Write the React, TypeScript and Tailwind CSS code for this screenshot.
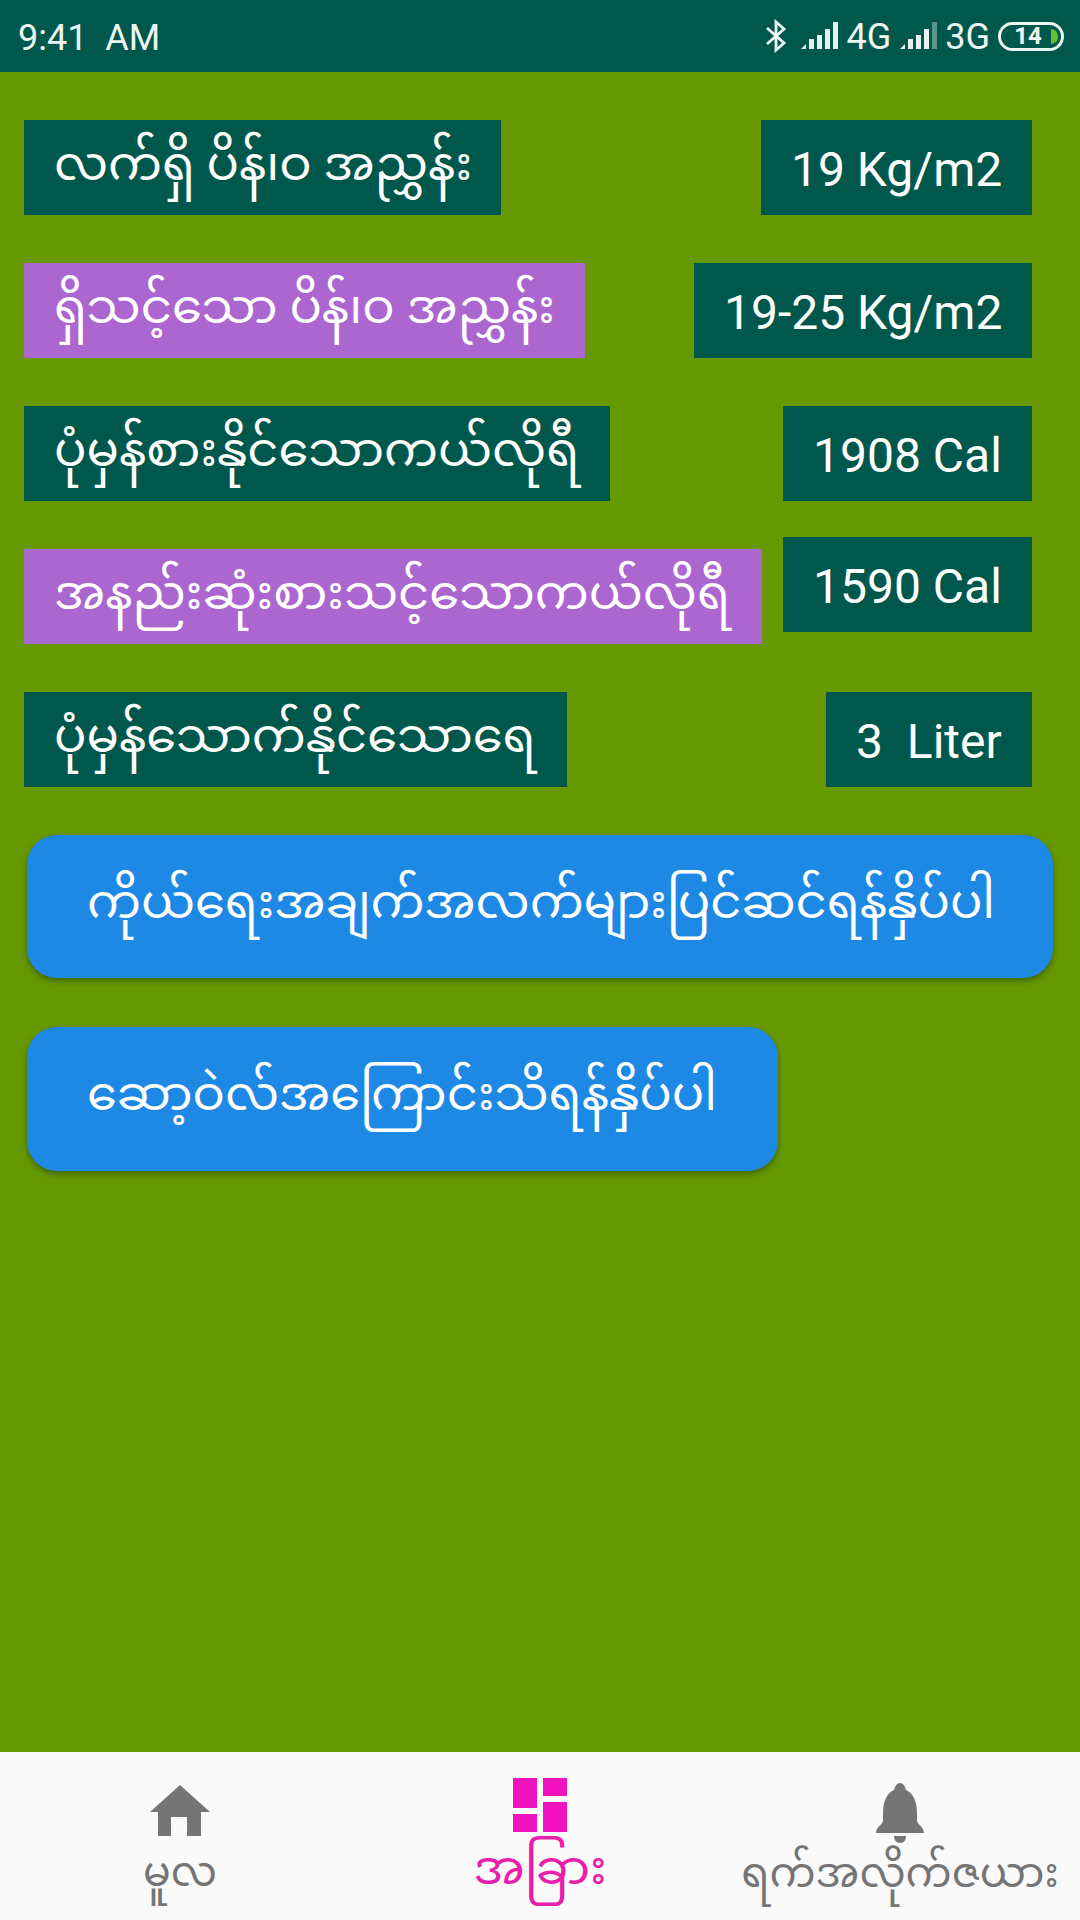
const font = "font-['Roboto','Noto_Sans_Myanmar','Padauk','Noto_Sans',sans-serif]"

const rows = [
  { label: 'လက်ရှိ ပိန်၊ဝ အညွှန်း', value: '19 Kg/m2', labelClass: 'w-[477px] bg-[#00574b]', valueClass: 'w-[271px]', rowClass: 'h-[95px] mb-[48px]' },
  { label: 'ရှိသင့်သော ပိန်၊ဝ အညွှန်း', value: '19-25 Kg/m2', labelClass: 'w-[561px] bg-[#ab66d0]', valueClass: 'w-[338px]', rowClass: 'h-[95px] mb-[48px]' },
  { label: 'ပုံမှန်စားနိုင်သောကယ်လိုရီ', value: '1908 Cal', labelClass: 'w-[586px] bg-[#00574b]', valueClass: 'w-[249px]', rowClass: 'h-[95px] mb-[36px]' },
]

function SignalIcon({ dim }: { dim?: boolean }) {
  return (
    <svg width="37" height="28" viewBox="0 0 37 28" className="text-[#e6f2ef]">
      <path d="M0 27 L5 22 L5 27 Z" fill="currentColor" />
      <rect x="8" y="17" width="5" height="10" fill="currentColor" />
      <rect x="16" y="13" width="5" height="14" fill="currentColor" />
      <rect x="24" y="7" width="5" height="20" fill="currentColor" />
      <rect x="32" y="0" width="5" height="27" fill="currentColor" opacity={dim ? 0.4 : 1} />
    </svg>
  )
}

function StatusBar() {
  return (
    <div className="h-[72px] bg-[#00574b] flex items-center justify-between pl-[18px] pr-[16px] text-[#eef6f4]">
      <span className="pt-[3px] text-[36px] font-['Roboto',sans-serif] whitespace-pre">9:41  AM</span>
      <div className="flex items-center font-['Roboto',sans-serif] text-[36px]">
        <svg width="24" height="34" viewBox="0 0 24 34" fill="none" stroke="currentColor" strokeWidth="2.8" className="mr-[13px]">
          <path d="M3 9 L20 24 L12 31 L12 3 L20 10 L3 25" />
        </svg>
        <SignalIcon />
        <span className="ml-[8px] mr-[9px] pt-[2px]">4G</span>
        <SignalIcon dim />
        <span className="ml-[8px] mr-[8px] pt-[2px]">3G</span>
        <div className="relative w-[66px] h-[29px] rounded-[15px] border-[3px] border-[#eef6f4] flex items-center justify-center pr-[6px]">
          <span className="text-[24px] font-bold leading-none">14</span>
          <div className="absolute right-[3px] top-[4px] w-[7px] h-[15px] rounded-r-[8px] bg-[#5fc32e]" />
        </div>
      </div>
    </div>
  )
}

function Box({ children, className }: { children: React.ReactNode; className: string }) {
  return (
    <div className={`h-[95px] flex items-center text-white text-[48px] pl-[30px] whitespace-pre overflow-hidden ${className}`}>
      {children}
    </div>
  )
}

function BottomNav() {
  return (
    <div className="h-[168px] bg-[#fafafa] grid grid-cols-[360px_360px_360px] font-['Roboto','Noto_Sans_Myanmar',sans-serif]">
      <div className="flex flex-col items-center pt-[33px] text-[#757575]">
        <svg width="60" height="51" viewBox="0 0 60 51" fill="currentColor">
          <path d="M30 0 L60 27 L51 27 L51 51 L37 51 L37 32 L21 32 L21 51 L8 51 L8 27 L0 27 Z" />
        </svg>
        <span className="mt-[9px] text-[41px] leading-[54px]">မူလ</span>
      </div>
      <div className="flex flex-col items-center pt-[26px] text-[#f012be]">
        <svg width="54" height="54" viewBox="0 0 54 54" fill="currentColor">
          <rect x="0" y="0" width="24" height="30" />
          <rect x="30" y="0" width="24" height="18" />
          <rect x="30" y="24" width="24" height="30" />
          <rect x="0" y="36" width="24" height="18" />
        </svg>
        <span className="mt-[9px] text-[48px] leading-[54px] text-[#e91ead]">အခြား</span>
      </div>
      <div className="flex flex-col items-center pt-[31px] text-[#757575]">
        <svg width="48" height="60" viewBox="0 0 48 60" fill="currentColor">
          <path d="M24 0 C27 0 29 3 30 7 C37 10 41 18 41 30 L41 38 C42 42 48 44 48 50 L0 50 C0 44 6 42 7 38 L7 30 C7 18 11 10 18 7 C19 3 21 0 24 0 Z" />
          <path d="M18 53 L30 53 C30 57 28 60 24 60 C20 60 18 57 18 53 Z" />
        </svg>
        <span className="mt-[3px] text-[41px] leading-[54px] whitespace-nowrap">ရက်အလိုက်ဇယား</span>
      </div>
    </div>
  )
}

export default function App() {
  return (
    <div className={`w-[1080px] h-[1920px] flex flex-col bg-[#669900] ${font}`}>
      <StatusBar />
      <div className="flex-1 pt-[48px]">
        {rows.map(r => (
          <div key={r.value} className={`flex justify-between pl-[24px] pr-[48px] ${r.rowClass}`}>
            <Box className={`${r.labelClass} pb-[7px]`}>{r.label}</Box>
            <Box className={`${r.valueClass} bg-[#00574b] pt-[5px]`}>{r.value}</Box>
          </div>
        ))}
        <div className="flex justify-between pl-[24px] pr-[48px] h-[107px] mb-[48px]">
          <Box className="w-[738px] self-end bg-[#ab66d0] pb-[7px]">အနည်းဆုံးစားသင့်သောကယ်လိုရီ</Box>
          <Box className="w-[249px] self-start bg-[#00574b] pt-[5px]">1590 Cal</Box>
        </div>
        <div className="flex justify-between pl-[24px] pr-[48px] h-[95px] mb-[48px]">
          <Box className="w-[543px] bg-[#00574b] pb-[7px]">ပုံမှန်သောက်နိုင်သောရေ</Box>
          <Box className="w-[206px] bg-[#00574b] pt-[5px]">3  Liter</Box>
        </div>
        <button className="block ml-[27px] w-[1026px] h-[143px] rounded-[30px] bg-[#1e88e5] shadow-[0_3px_6px_rgba(0,0,0,0.35)] text-white text-[48px] text-left pl-[60px] pb-[10px] mb-[49px] whitespace-nowrap">
          ကိုယ်ရေးအချက်အလက်များပြင်ဆင်ရန်နှိပ်ပါ
        </button>
        <button className="block ml-[27px] w-[751px] h-[144px] rounded-[30px] bg-[#1e88e5] shadow-[0_3px_6px_rgba(0,0,0,0.35)] text-white text-[48px] text-left pl-[60px] pb-[10px] whitespace-nowrap">
          ဆော့ဝဲလ်အကြောင်းသိရန်နှိပ်ပါ
        </button>
      </div>
      <BottomNav />
    </div>
  )
}
